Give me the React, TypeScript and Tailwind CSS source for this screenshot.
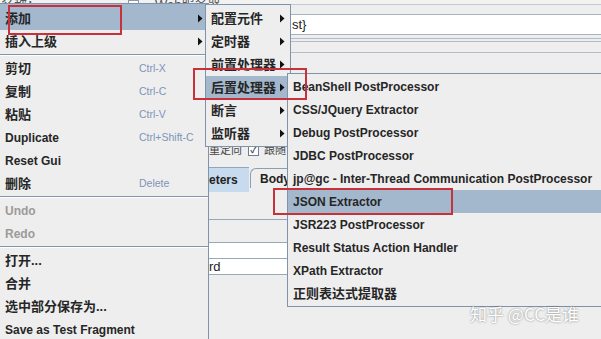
type Item = {
    label: string
    zh?: boolean
    shortcut?: string
    arrow?: boolean
    disabled?: boolean
    active?: boolean
    sep?: boolean
}

const mainItems: Item[] = [
    { label: '添加', zh: true, arrow: true, active: true },
    { label: '插入上级', zh: true, arrow: true },
    { label: '', sep: true },
    { label: '剪切', zh: true, shortcut: 'Ctrl-X' },
    { label: '复制', zh: true, shortcut: 'Ctrl-C' },
    { label: '粘贴', zh: true, shortcut: 'Ctrl-V' },
    { label: 'Duplicate', shortcut: 'Ctrl+Shift-C' },
    { label: 'Reset Gui' },
    { label: '删除', zh: true, shortcut: 'Delete' },
    { label: '', sep: true },
    { label: 'Undo', disabled: true },
    { label: 'Redo', disabled: true },
    { label: '', sep: true },
    { label: '打开...', zh: true },
    { label: '合并', zh: true },
    { label: '选中部分保存为...', zh: true },
    { label: 'Save as Test Fragment' },
]

const addItems: Item[] = [
    { label: '配置元件', zh: true, arrow: true },
    { label: '定时器', zh: true, arrow: true },
    { label: '前置处理器', zh: true, arrow: true },
    { label: '后置处理器', zh: true, arrow: true, active: true },
    { label: '断言', zh: true, arrow: true },
    { label: '监听器', zh: true, arrow: true },
]

const postItems: Item[] = [
    { label: 'BeanShell PostProcessor' },
    { label: 'CSS/JQuery Extractor' },
    { label: 'Debug PostProcessor' },
    { label: 'JDBC PostProcessor' },
    { label: 'jp@gc - Inter-Thread Communication PostProcessor' },
    { label: 'JSON Extractor', active: true },
    { label: 'JSR223 PostProcessor' },
    { label: 'Result Status Action Handler' },
    { label: 'XPath Extractor' },
    { label: '正则表达式提取器', zh: true },
]

function Arrow() {
    return (
        <svg width="5" height="9" viewBox="0 0 5 9" className="shrink-0">
            <path d="M0 0.5L4.5 4.5L0 8.5Z" fill="#111111" />
        </svg>
    )
}

function Separator() {
    return (
        <div className="flex flex-col justify-center h-[4px]">
            <div className="h-px bg-[#8294ab]" />
            <div className="h-px bg-white" />
        </div>
    )
}

function MenuRow({ item, first, labelWidth }: { item: Item; first?: boolean; labelWidth?: string }) {
    if (item.sep) return <Separator />
    return (
        <div
            className={`flex items-center pl-[5px] pr-[5px] ${first ? 'h-[26px] pt-[3px]' : 'h-[23px]'} ${
                item.active ? 'bg-[#a3b8cc]' : ''
            }`}
        >
            <span
                className={`${labelWidth ?? 'flex-1'} whitespace-nowrap font-bold ${item.zh ? 'text-[13px]' : 'text-[12px]'} ${
                    item.disabled ? 'text-[#9b9b9b]' : 'text-[#262626]'
                }`}
            >
                {item.label}
            </span>
            {item.shortcut && <span className="flex-1 text-[10.5px] text-[#7d95b7]">{item.shortcut}</span>}
            {!item.shortcut && labelWidth && <span className="flex-1" />}
            {item.arrow && <Arrow />}
        </div>
    )
}

export default function App() {
    return (
        <div className="relative w-[601px] h-[339px] overflow-hidden bg-[#eeeeee] font-['Liberation_Sans','Noto_Sans_CJK_SC',sans-serif]">
            {/* 背景窗口 */}
            <div className="flex flex-col h-full">
                <div className="h-[4px] shrink-0 overflow-hidden bg-[#f2f2f2] flex items-end">
                    <div className="flex items-center h-[14px] -mb-[8px] text-[13px] text-[#555] whitespace-nowrap">
                        <span className="w-[128px] pl-px">名称：</span>
                        <span className="w-[11px] h-[11px] border border-[#8a98a8] bg-white" />
                        <span className="ml-[16px]">Web服务器</span>
                    </div>
                </div>
                <div className="flex flex-1">
                    <div className="w-[208px] shrink-0" />
                    <div className="flex flex-1 flex-col">
                        <div className="h-px bg-[#c2c9d2]" />
                        <div className="h-[9px]" />
                        <div className="h-[21px] flex items-center bg-white border-y border-[#a7b2bf] pl-[84px] text-[13px] text-[#222]">
                            st&#125;
                        </div>
                        <div className="h-[3px]" />
                        <div className="h-px bg-[#b4bcc7]" />
                        <div className="h-[2px]" />
                        <div className="h-px bg-[#b4bcc7]" />
                        <div className="h-[10px]" />
                        <div className="h-px bg-[#b4bcc7]" />
                        <div className="h-[90px]" />
                        <div className="w-[79px] h-[14px] overflow-hidden flex items-center text-[11px] text-[#444] whitespace-nowrap">
                            <span className="w-[40px] shrink-0 pl-[1px]">重定向</span>
                            <span className="w-[11px] h-[11px] shrink-0 border border-[#6d7f96] bg-white flex items-center justify-center text-[9px] leading-none font-bold">
                                ✓
                            </span>
                            <span className="ml-[5px]">跟随</span>
                        </div>
                        <div className="h-[10px]" />
                        <div className="h-[25px] flex items-end">
                            <div className="h-[25px] w-[41px] bg-[#c8daee] border-t border-[#8fa6c0] flex items-center pl-[1px] text-[12px] font-bold text-[#222]">
                                eters
                            </div>
                            <div className="w-[38px] h-[20px] mb-[4px] ml-[1px] pl-[9px] border-t border-l border-[#8d9db2] rounded-tl-[6px] flex items-center text-[12px] font-bold text-[#222] overflow-hidden">
                                Body
                            </div>
                            <div className="flex-1 h-[4px] mb-[4px] border-t border-[#8d9db2]" />
                        </div>
                        <div className="h-[27px]" />
                        <div className="h-px bg-[#9aa7b6]" />
                        <div className="h-[22px]" />
                        <div className="h-px bg-[#9aa7b6]" />
                        <div className="h-[15px] bg-white" />
                        <div className="h-px bg-[#9aa7b6]" />
                        <div className="h-[15px] bg-white flex items-center pl-px text-[13px] text-[#222]">rd</div>
                        <div className="h-px bg-[#9aa7b6]" />
                    </div>
                </div>
            </div>

            {/* 右键菜单 */}
            <div className="absolute left-0 top-[3px] w-[209px] h-[340px] bg-[#eeeeee] border-t border-r border-[#7f93ad]">
                {mainItems.map((it, i) => (
                    <MenuRow key={i} item={it} first={i === 0} labelWidth="w-[134px]" />
                ))}
            </div>

            <div className="absolute left-[205px] top-[4px] w-[86px] bg-[#eeeeee] border border-[#7f93ad] pt-[2px] pb-px">
                {addItems.map((it, i) => (
                    <MenuRow key={i} item={it} />
                ))}
            </div>

            <div className="absolute left-[287px] top-[73px] w-[330px] bg-[#eeeeee] border border-[#7f93ad] pt-px pb-px">
                {postItems.map((it, i) => (
                    <MenuRow key={i} item={it} />
                ))}
            </div>

            {/* 标注框 */}
            <div className="absolute left-[8px] top-[5px] w-[114px] h-[30px] border-2 border-[#c8303a]" />
            <div className="absolute left-[193px] top-[68px] w-[114px] h-[32px] border-2 border-[#c8303a]" />
            <div className="absolute left-[273px] top-[188px] w-[180px] h-[27px] border-2 border-[#c8303a]" />

            <div className="absolute left-[470px] top-[301px] text-[17px] text-white font-['Noto_Sans_CJK_SC',sans-serif] [text-shadow:0_0_2px_rgba(0,0,0,0.5)] whitespace-nowrap">
                知乎 @CC是谁
            </div>
        </div>
    )
}
